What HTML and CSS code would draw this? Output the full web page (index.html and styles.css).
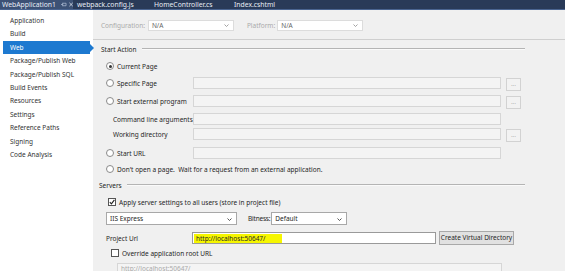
FILE: index.html
```html
<!DOCTYPE html>
<html lang="en">
<head>
    <meta charset="UTF-8">
    <title>WebApplication1 – Properties</title>
    <link rel="stylesheet" href="styles.css">
</head>
<body>
    <div class="tabs">
        <div class="tab active">
            <span>WebApplication1</span>
            <svg class="pin" width="7" height="5" viewBox="0 0 7 5"><path d="M0 2.5h2M2 0.5v4M2 1h4M2 4h4M6 1v3" stroke="#b9c6dc" stroke-width="0.8" fill="none"/></svg>
            <svg class="close" width="5" height="5" viewBox="0 0 5 5"><path d="M0.5 0.5l4 4M4.5 0.5l-4 4" stroke="#e8edf5" stroke-width="0.9"/></svg>
        </div>
        <div class="tab">webpack.config.js</div>
        <div class="tab">HomeController.cs</div>
        <div class="tab">Index.cshtml</div>
    </div>

    <div class="editor">
        <nav class="side">
            <div class="side-item">Application</div>
            <div class="side-item">Build</div>
            <div class="side-item selected">Web</div>
            <div class="side-item">Package/Publish Web</div>
            <div class="side-item">Package/Publish SQL</div>
            <div class="side-item">Build Events</div>
            <div class="side-item">Resources</div>
            <div class="side-item">Settings</div>
            <div class="side-item">Reference Paths</div>
            <div class="side-item">Signing</div>
            <div class="side-item">Code Analysis</div>
        </nav>

        <main class="props">
            <div class="config-row">
                <span class="muted">Configuration:</span>
                <div class="select off cfg-select">N/A<svg class="chev" width="5" height="3" viewBox="0 0 5 3"><path d="M0.5 0.5l2 2 2-2" stroke="#999" stroke-width="0.9" fill="none"/></svg></div>
                <span class="muted plat-label">Platform:</span>
                <div class="select off plat-select">N/A<svg class="chev" width="5" height="3" viewBox="0 0 5 3"><path d="M0.5 0.5l2 2 2-2" stroke="#999" stroke-width="0.9" fill="none"/></svg></div>
            </div>

            <div class="group-title"><span>Start Action</span><div class="rule"></div></div>

            <div class="row current"><span class="radio on"></span><span>Current Page</span></div>
            <div class="row r-specific">
                <div class="lbl"><span class="radio"></span><span>Specific Page</span></div>
                <div class="field off"></div>
                <div class="dots">...</div>
            </div>
            <div class="row r-ext">
                <div class="lbl"><span class="radio"></span><span>Start external program</span></div>
                <div class="field off"></div>
                <div class="dots">...</div>
            </div>
            <div class="row r-cmd">
                <div class="lbl sub">Command line arguments</div>
                <div class="field off"></div>
            </div>
            <div class="row r-wd">
                <div class="lbl sub">Working directory</div>
                <div class="field off"></div>
                <div class="dots">...</div>
            </div>
            <div class="row r-url">
                <div class="lbl"><span class="radio"></span><span>Start URL</span></div>
                <div class="field off"></div>
            </div>
            <div class="row r-none"><span class="radio"></span><span>Don't open a page.&nbsp; Wait for a request from an external application.</span></div>

            <div class="group-title servers"><span>Servers</span><div class="rule"></div></div>

            <div class="row check-row"><span class="check"><svg width="6" height="6" viewBox="0 0 6 6"><path d="M0.8 3.2l1.6 1.6 3-4" stroke="#222" stroke-width="1.1" fill="none"/></svg></span><span>Apply server settings to all users (store in project file)</span></div>
            <div class="row server-row">
                <div class="select iis">IIS Express<svg class="chev" width="5" height="3" viewBox="0 0 5 3"><path d="M0.5 0.5l2 2 2-2" stroke="#444" stroke-width="0.9" fill="none"/></svg></div>
                <span class="bit-label">Bitness:</span>
                <div class="select bit">Default<svg class="chev" width="5" height="3" viewBox="0 0 5 3"><path d="M0.5 0.5l2 2 2-2" stroke="#444" stroke-width="0.9" fill="none"/></svg></div>
            </div>
            <div class="row url-row">
                <div class="lbl url-lbl">Project Url</div>
                <div class="field url"><span class="hl">http://localhost:50647/</span></div>
                <div class="btn">Create Virtual Directory</div>
            </div>
            <div class="row override"><span class="check"></span><span>Override application root URL</span></div>
            <div class="row root-row">
                <div class="field off root">http://localhost:50647/</div>
            </div>
        </main>
    </div>
</body>
</html>
```

FILE: styles.css
```css
body { margin: 0; width: 565px; height: 271px; overflow: hidden; font-family: "Noto Sans", "Open Sans", sans-serif; font-size: 6.5px; color: #262626; background: #f0f0f0; white-space: nowrap; }

.tabs { display: flex; height: 10px; background: #293a58; border-bottom: 1px solid #4a6490; box-sizing: border-box; color: #e8edf5; font-size: 6.8px; }
.tab { line-height: 9px; padding-left: 2px; width: 75px; }
.tab.active { display: flex; align-items: center; background: #3c5175; width: 71px; margin-right: 2px; }
.tab:nth-child(3) { width: 78px; }
.pin { margin-left: 5px; }
.close { margin-left: 2px; }

.editor { display: flex; height: 261px; }
.side { width: 93px; flex: none; background: #fff; padding-top: 4px; box-sizing: border-box; }
.side-item { height: 13.4px; line-height: 13.4px; padding-left: 10px; color: #333; }
.side-item.selected { position: relative; margin: 0 3px; padding-left: 7px; background: #1d79d0; color: #fff; }
.side-item.selected::after { content: ""; position: absolute; right: -4px; top: 3px; border-left: 4px solid #1d79d0; border-top: 4px solid transparent; border-bottom: 4px solid transparent; }

.props { flex: 1; padding-left: 13px; }
.muted { color: #aaa; }

.config-row { display: flex; align-items: center; height: 30px; margin-left: -13px; padding: 1px 0 0 8px; border-bottom: 1px solid #cfcfcf; box-sizing: border-box; }
.select { position: relative; height: 11px; line-height: 10px; border: 1px solid #b8b8b8; background: #fff; box-sizing: border-box; padding-left: 3px; }
.select.off { border-color: #dcdcdc; color: #666; }
.chev { position: absolute; right: 4px; top: 3.5px; }
.cfg-select { width: 86px; margin-left: 3px; }
.plat-label { margin-left: 13px; }
.plat-select { width: 86px; margin-left: 2px; }

.group-title { display: flex; align-items: center; height: 18px; margin-left: -5px; margin-right: 40px; }
.group-title .rule { flex: 1; margin-left: 5px; border-top: 1px solid #b4b4b4; border-bottom: 1px solid #fafafa; }
.group-title.servers { height: 16px; margin-top: 2px; margin-left: -7px; }

.row { display: flex; align-items: center; height: 12px; }
.row.current { height: 10px; margin-top: 3px; }
.r-specific { margin-top: 6px; }
.r-ext { margin-top: 6px; }
.r-cmd { margin-top: 6px; }
.r-wd { margin-top: 3px; }
.r-url { margin-top: 7px; }
.r-none { margin-top: 4px; }
.lbl { display: flex; align-items: center; width: 87px; flex: none; }
.lbl.sub { padding-left: 7px; box-sizing: border-box; }

.radio { width: 6px; height: 6px; border: 1px solid #8a8a8a; border-radius: 50%; background: #fff; margin-right: 3px; flex: none; position: relative; }
.radio.on::after { content: ""; position: absolute; left: 1.5px; top: 1.5px; width: 3px; height: 3px; border-radius: 50%; background: #333; }

.field { width: 308px; height: 12px; flex: none; box-sizing: border-box; border: 1px solid #d6d6d6; background: #f4f4f4; }
.dots { width: 15px; height: 13px; margin: 2px 0 0 5px; flex: none; box-sizing: border-box; border: 1px solid #d2d2d2; background: #f2f2f2; color: #bbb; text-align: center; line-height: 9px; }

.check { display: flex; width: 6px; height: 6px; border: 1px solid #555; background: #fff; margin-right: 3px; flex: none; }
.check-row { margin-top: 3px; padding-left: 2px; }

.server-row { height: 13px; margin-top: 4px; }
.iis { width: 131px; }
.bit-label { margin: 0 1px 0 11px; letter-spacing: -0.2px; }
.bit { width: 76px; }
.server-row .select { height: 13px; line-height: 12px; border-color: #a8a8a8; }
.server-row .chev { top: 4.5px; }

.url-row { height: 14px; margin-top: 6px; }
.url-lbl { width: 86px; }
.field.url { width: 244px; background: #fff; border-color: #9a9a9a; padding: 1px; }
.hl { display: block; width: 86px; height: 9px; line-height: 9px; background: #f6f600; padding-left: 2px; }
.btn { width: 75px; height: 14px; margin-left: 3px; flex: none; box-sizing: border-box; border: 1px solid #a9a9a9; background: #e1e1e1; text-align: center; line-height: 12px; }

.override { height: 10px; margin-top: 3px; padding-left: 5px; }
.root-row { margin-top: 5px; padding-left: 11px; }
.field.root { width: 385px; height: 12px; color: #aaa; padding-left: 3px; line-height: 10px; }
```
